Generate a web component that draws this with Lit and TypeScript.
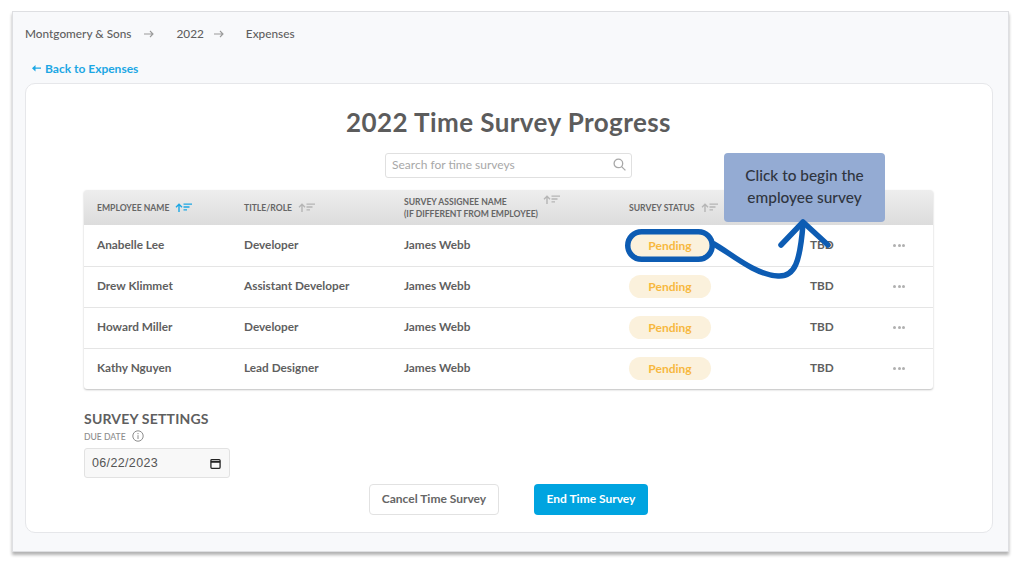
import { LitElement, html, css, svg } from "lit";
import { customElement } from "lit/decorators.js";

const sortIcon = (on: boolean) => html`<svg class="sort ${on ? "on" : ""}" width="17" height="9" viewBox="0 0 17 9" fill="none" stroke="currentColor">
  <path d="M4 9V1.5M1 4.2 4 1.2 7 4.2" stroke-width="1.4"/>
  <path d="M8.5 1.2H17M8.5 4H14.5M8.5 6.8H12" stroke-width="1.3"/>
</svg>`;

const rows = [
  ["Anabelle Lee", "Developer"],
  ["Drew Klimmet", "Assistant Developer"],
  ["Howard Miller", "Developer"],
  ["Kathy Nguyen", "Lead Designer"],
];

@customElement("app-root")
export class AppRoot extends LitElement {
  static styles = css`
    :host { display: block; height: 561px; overflow: hidden; background: #fff; font-family: "Lato", "Noto Sans", sans-serif; color: #5f5f5f; }
    .frame { position: relative; margin: 11px 15px 0 12px; height: 541px; box-sizing: border-box; background: #f8f9fb; border: 1px solid #dedfe2; box-shadow: 0 3px 3px rgba(0,0,0,.3); padding: 0 15px 0 12px; }
    .crumbs { display: flex; align-items: center; height: 43px; font-size: 11.8px; font-weight: 500; color: #5f5f5f; }
    .a1 { margin: 0 22px 0 13px; } .a2 { margin: 0 22px 0 10px; }
    .back { box-sizing: border-box; display: flex; align-items: center; gap: 4px; height: 28px; padding: 0 0 2px 7px; font-size: 12px; font-weight: 700; color: #1ca7e4; }
    .card { box-sizing: border-box; height: 450px; background: #fff; border: 1px solid #e6e7ea; border-radius: 10px; padding: 0 59px 0 58px; display: flex; flex-direction: column; }
    h1 { margin: 20px 0 0; height: 36px; line-height: 36px; text-align: center; font-size: 26px; font-weight: 700; color: #5c5c5c; letter-spacing: .42px; }
    .search { box-sizing: border-box; margin: 13px auto 0; width: 247px; height: 25px; flex: none; border: 1px solid #e0e0e0; border-radius: 3px; display: flex; align-items: center; justify-content: space-between; padding: 0 5px 2px 6px; font-size: 12px; color: #a8a8a8; }
    .table { margin-top: 12px; border-radius: 3px; box-shadow: 0 1px 2px rgba(0,0,0,.25); flex: none; }
    .row { display: grid; grid-template-columns: 147px 160px 225px 181px 83px 53px; align-items: center; height: 41px; border-top: 1px solid #e5e5e5; box-sizing: border-box; padding-bottom: 2px; font-size: 11.8px; font-weight: 700; color: #5f5f5f; }
    .row > div { padding-left: 13px; }
    .row > .t { padding-bottom: 2px; }
    .row.first { border-top: none; padding-bottom: 1px; }
    .row.head { height: 35px; border: none; padding-bottom: 0; background: linear-gradient(#eeeeee, #dcdcdc); font-size: 8.6px; font-weight: 700; color: #666; border-radius: 3px 3px 0 0; line-height: 12px; }
    .head .cell { display: flex; align-items: center; gap: 6px; }
    .sort { color: #b5b5b5; flex: none; }
    .sort.on { color: #1ca7e4; }
    .pill { width: 82px; height: 23px; line-height: 23px; text-align: center; border-radius: 12px; background: #fbf1dc; color: #f7b83f; font-weight: 700; font-size: 12px; }
    .dots { display: flex; gap: 1.5px; }
    .dots i { width: 3px; height: 3px; border-radius: 50%; background: #b0b0b0; }
    .settings { margin-top: 21px; font-size: 14px; font-weight: 700; color: #5f5f5f; line-height: 17px; letter-spacing: .2px; }
    .due { display: flex; align-items: center; gap: 6px; font-size: 8.6px; color: #8c8c8c; font-weight: 500; height: 17px; margin-top: 1px; }
    .due svg { margin-top: -2px; }
    .date { box-sizing: border-box; width: 146px; height: 30px; border: 1px solid #e2e2e2; border-radius: 3px; background: #f8f8f8; display: flex; align-items: center; justify-content: space-between; padding: 0 8px 0 7px; font-family: "Liberation Sans", sans-serif; font-size: 12.5px; color: #555; margin-top: 3px; letter-spacing: .35px; }
    .actions { display: flex; justify-content: center; gap: 35px; margin-top: 6px; }
    .btn { box-sizing: border-box; height: 31px; padding-bottom: 3px; display: flex; align-items: center; justify-content: center; border-radius: 4px; font-size: 12px; font-weight: 700; }
    .cancel { width: 130px; border: 1px solid #e2e2e2; background: #fff; color: #666; }
    .end { width: 114px; background: #00a4e0; color: #fff; }
    .tip { position: absolute; left: 711px; top: 141px; width: 161px; height: 69px; box-sizing: border-box; border-radius: 4px; background: #94abd3; color: #2f3540; font-size: 15.4px; line-height: 21.5px; text-align: center; padding-top: 12px; font-weight: 500; }
    .overlay { position: absolute; left: -13px; top: -12px; pointer-events: none; }
    .floatsort { position: absolute; left: 530px; top: 183px; color: #b5b5b5; }
  `;

  render() {
    return html`<div class="frame">
      <div class="crumbs">
        <span>Montgomery &amp; Sons</span>
        <svg class="a1" width="10" height="8" viewBox="0 0 10 8" fill="none" stroke="#9a9a9a" stroke-width="1.1"><path d="M0 4H9M6 1l3 3-3 3"/></svg>
        <span>2022</span>
        <svg class="a2" width="10" height="8" viewBox="0 0 10 8" fill="none" stroke="#9a9a9a" stroke-width="1.1"><path d="M0 4H9M6 1l3 3-3 3"/></svg>
        <span>Expenses</span>
      </div>
      <div class="back">
        <svg width="9" height="7" viewBox="0 0 9 7" fill="#1ca7e4"><path d="M0 3.2 3.5 0v2.4H9v1.4H3.5V6.4z"/></svg>
        <span>Back to Expenses</span>
      </div>
      <div class="card">
        <h1>2022 Time Survey Progress</h1>
        <div class="search">
          <span>Search for time surveys</span>
          <svg width="13" height="13" viewBox="0 0 13 13" fill="none" stroke="#a8a8a8" stroke-width="1.3"><circle cx="5.4" cy="5.4" r="4.3"/><path d="M8.6 8.6 12.4 12.4"/></svg>
        </div>
        <div class="table">
          <div class="row head">
            <div class="cell"><span>EMPLOYEE NAME</span>${sortIcon(true)}</div>
            <div class="cell"><span>TITLE/ROLE</span>${sortIcon(false)}</div>
            <div class="cell"><span>SURVEY ASSIGNEE NAME<br />(IF DIFFERENT FROM EMPLOYEE)</span></div>
            <div class="cell"><span>SURVEY STATUS</span>${sortIcon(false)}</div>
            <div></div><div></div>
          </div>
          ${rows.map(
            (r, i) => html`<div class="row ${i === 0 ? "first" : ""}">
              <div class="t">${r[0]}</div><div class="t">${r[1]}</div><div class="t">James Webb</div>
              <div><div class="pill">Pending</div></div>
              <div class="t">TBD</div>
              <div><span class="dots"><i></i><i></i><i></i></span></div>
            </div>`
          )}
        </div>
        <div class="settings">SURVEY SETTINGS</div>
        <div class="due">
          <span>DUE DATE</span>
          <svg width="12" height="12" viewBox="0 0 12 12" fill="none" stroke="#8c8c8c"><circle cx="6" cy="6" r="5.2"/><path d="M6 5.2V9M6 3V4.2"/></svg>
        </div>
        <div class="date">
          <span>06/22/2023</span>
          <svg width="11" height="11" viewBox="0 0 12 12" fill="none" stroke="#222" stroke-width="1.4"><rect x="1" y="1.7" width="10" height="9.5" rx="1"/><path d="M1 4.2H11" stroke-width="2"/></svg>
        </div>
        <div class="actions">
          <div class="btn cancel">Cancel Time Survey</div>
          <div class="btn end">End Time Survey</div>
        </div>
      </div>
      <div class="tip">Click to begin the<br />employee survey</div>
      <svg class="overlay" width="1024" height="561" viewBox="0 0 1024 561" fill="none" stroke="#0d5cb3" stroke-linecap="round" stroke-linejoin="round" stroke-width="5.5">
        ${svg`
          <rect x="627.75" y="231.75" width="84.5" height="27.5" rx="13.75"/>
          <path d="M714 244C730 253 755 275 778 276C795 277 800 262 803 224"/>
          <path d="M781 245 803 222 828 245"/>
        `}
      </svg>
      <svg class="floatsort" width="17" height="9" viewBox="0 0 17 9" fill="none" stroke="currentColor">
        <path d="M4 9V1.5M1 4.2 4 1.2 7 4.2" stroke-width="1.4"/>
        <path d="M8.5 1.2H17M8.5 4H14.5M8.5 6.8H12" stroke-width="1.3"/>
      </svg>
    </div>`;
  }
}
